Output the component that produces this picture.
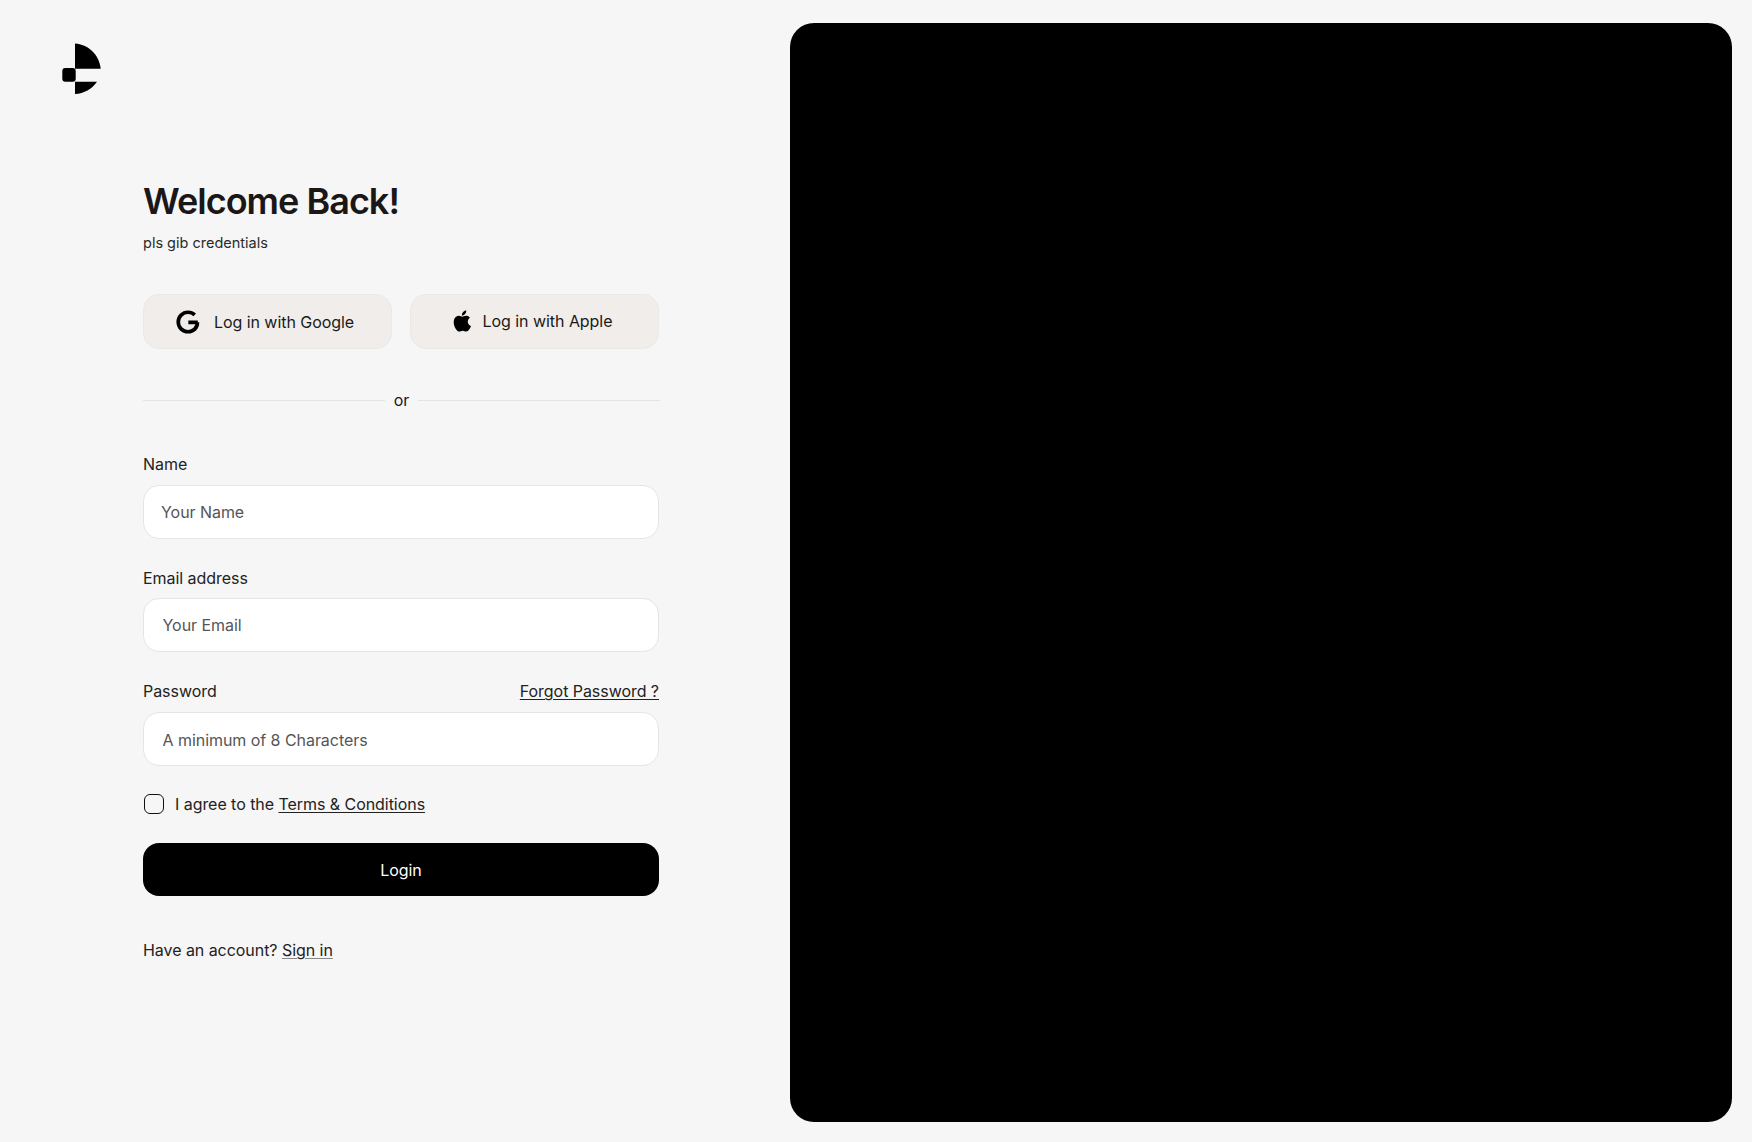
<div class="page">
  <section class="left">
    <svg class="logo" viewBox="0 0 39 51" width="39" height="51" aria-hidden="true">
      <path d="M13 0.500 C26 1.500 37 11 38.700 25.700 L13 25.700 Z" fill="#000" />
      <rect x="0.300" y="25" width="13.400" height="13.700" rx="3" fill="#000" />
      <path d="M13 38.700 L35 38.700 C30 46 22 50.500 13 51 Z" fill="#000" />
    </svg>

    <div class="form">
      <h1>Welcome Back!</h1>
      <p class="sub">pls gib credentials</p>

      <div class="socials">
        <button class="social google">
          <svg viewBox="0 0 24 24" width="26" height="26" aria-hidden="true">
            <path fill="none" stroke="#000" stroke-width="3.400" d="M21 12.300 H12.300 M20.700 12.300 C20.700 17.500 17 21 12 21 C7 21 3 17 3 12 C3 7 7 3 12 3 C14.500 3 16.600 3.900 18.200 5.400" />
          </svg>
          <span>Log in with Google</span>
        </button>
        <button class="social apple">
          <svg viewBox="0 0 24 24" width="28" height="28" aria-hidden="true">
            <path fill="#000" d="M17.800 12.700c0-2.200 1.800-3.300 1.900-3.400-1-1.500-2.600-1.700-3.200-1.700-1.400-.1-2.700.8-3.400.8-.7 0-1.800-.8-2.900-.8-1.500 0-2.900.9-3.700 2.200-1.600 2.700-.4 6.800 1.100 9 .8 1.100 1.700 2.300 2.900 2.300 1.200 0 1.600-.7 3-.7s1.800.7 3 .7c1.200 0 2-1.100 2.800-2.200.9-1.300 1.200-2.500 1.300-2.600-.1 0-2.800-.9-2.800-3.800zM15.500 6c.6-.8 1.100-1.900 1-3-.9 0-2.100.6-2.800 1.400-.6.700-1.100 1.800-1 2.900 1.100.1 2.100-.5 2.800-1.300z" />
          </svg>
          <span>Log in with Apple</span>
        </button>
      </div>

      <div class="divider"><i></i><span>or</span><i></i></div>

      <div class="field first">
        <div class="label-row"><label for="name">Name</label></div>
        <input id="name" class="name-input" placeholder="Your Name" />
      </div>
      <div class="field">
        <div class="label-row"><label for="email">Email address</label></div>
        <input id="email" placeholder="Your Email" />
      </div>
      <div class="field pw">
        <div class="label-row">
          <label for="pw">Password</label>
          <a href="#forgot">Forgot Password ?</a>
        </div>
        <input id="pw" class="pw-input" placeholder="A minimum of 8 Characters" />
      </div>

      <div class="agree">
        <span class="box"></span>
        <span>I agree to the <a href="#terms">Terms &amp; Conditions</a></span>
      </div>

      <button class="login">Login</button>

      <p class="account">Have an account? <a class="soft" href="#signin">Sign in</a></p>
    </div>
  </section>
  <aside class="panel"></aside>
</div>

<style>
  :global(body) {
    margin: 0;
    background: #f6f6f6;
  }
  .page {
    display: flex;
    width: 1752px;
    height: 1142px;
    box-sizing: border-box;
    padding: 23px 20px 20px 0;
    font-family: Inter, "Liberation Sans", sans-serif;
    color: #1a1a1a;
    font-size: 16px;
    letter-spacing: -0.05px;
  }
  .left {
    width: 790px;
    flex: none;
    box-sizing: border-box;
    padding: 20px 0 0 62px;
  }
  .logo {
    display: block;
  }
  .form {
    width: 516px;
    margin-left: 81px;
  }
  .panel {
    flex: 1;
    background: #000;
    border-radius: 24px;
  }
  h1 {
    margin: 0;
    padding-top: 85px;
    font-size: 36px;
    line-height: 44px;
    font-weight: 600;
    letter-spacing: -0.98px;
    color: #1a1716;
  }
  .sub {
    margin: 10px 0 0;
    font-size: 14.500px;
    line-height: 20px;
    letter-spacing: 0;
    color: #2a2a2a;
  }
  .socials {
    display: grid;
    grid-template-columns: 1fr 1fr;
    gap: 18px;
    margin-top: 41px;
  }
  .social {
    box-sizing: border-box;
    height: 55px;
    display: flex;
    align-items: center;
    justify-content: center;
    background: #f1edea;
    border: 1px solid #ebe9e6;
    border-radius: 16px;
    font: inherit;
    letter-spacing: inherit;
    color: #1a1a1a;
  }
  .google {
    gap: 13px;
    padding: 0 6px 0 0;
  }
  .apple {
    gap: 8px;
    padding: 0 10px 2px 0;
  }
  .divider {
    display: flex;
    align-items: center;
    gap: 9px;
    margin-top: 39px;
    width: 517px;
    height: 24px;
  }
  .divider i {
    flex: 1;
    height: 1px;
    background: #e3e3e3;
  }
  .field {
    margin-top: 27px;
  }
  .field.first {
    margin-top: 40px;
  }
  .field.pw {
    margin-top: 27px;
  }
  .label-row {
    display: flex;
    justify-content: space-between;
    height: 24px;
    line-height: 24px;
    margin-bottom: 8px;
    color: #222;
  }
  .field.first .label-row,
  .field.pw .label-row {
    margin-bottom: 9px;
  }
  a {
    color: inherit;
    text-underline-offset: 2px;
    text-decoration-thickness: 1px;
  }
  .soft {
    text-decoration-color: #888;
  }
  input {
    display: block;
    width: 100%;
    box-sizing: border-box;
    height: 54px;
    border: 1px solid #e5e5e5;
    border-radius: 16px;
    background: #fff;
    padding: 0 18px 0 18.500px;
    font: inherit;
    letter-spacing: inherit;
    outline: none;
  }
  .name-input {
    padding-left: 17px;
  }
  .pw-input {
    padding-top: 2px;
  }
  input::placeholder {
    color: #555;
    opacity: 1;
  }
  .agree {
    display: flex;
    align-items: center;
    gap: 11px;
    margin-top: 26px;
    padding-left: 1px;
    height: 24px;
    color: #222;
  }
  .box {
    width: 18px;
    height: 18px;
    border: 1.500px solid #111;
    border-radius: 6px;
  }
  .login {
    display: block;
    width: 100%;
    height: 53px;
    margin-top: 27px;
    background: #000;
    color: #fff;
    border: 0;
    border-radius: 16px;
    font: inherit;
    letter-spacing: inherit;
  }
  .account {
    margin: 42px 0 0;
    line-height: 24px;
    color: #222;
  }
</style>
